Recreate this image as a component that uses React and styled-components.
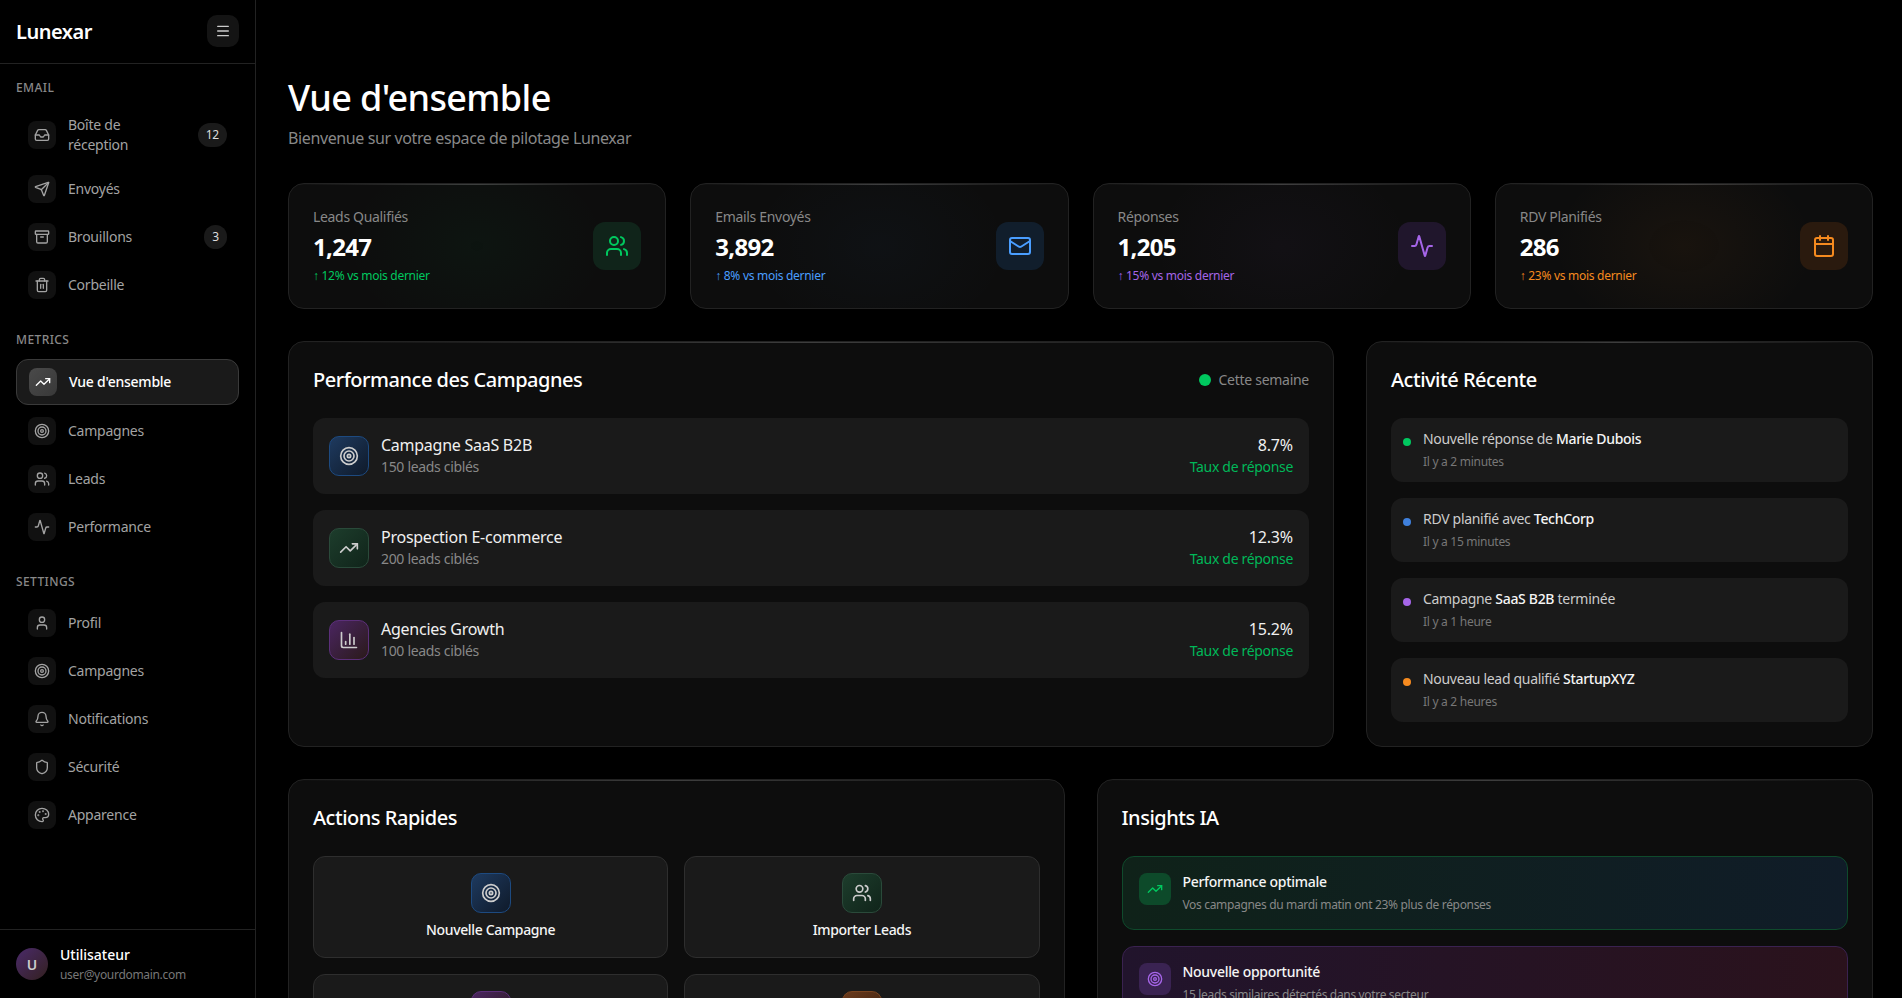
import React from 'react';
import styled, { createGlobalStyle } from 'styled-components';
import { Menu, Inbox, Send, Archive, Trash2, TrendingUp, Target, Users, Activity, User, Bell, Shield, Palette, Mail, Calendar, ChartColumn, Zap } from 'lucide-react';

const Global = createGlobalStyle`
  html, body { margin: 0; padding: 0; background: #000; height: 100%; overflow: hidden; }
  * { box-sizing: border-box; }
  body { font-family: "Noto Sans", "Open Sans", sans-serif; color: #fff; }
`;

const Shell = styled.div`display: flex; height: 998px; overflow: hidden; background: #000;`;
const Sidebar = styled.aside`width: 256px; flex: none; border-right: 1px solid #222; display: flex; flex-direction: column;`;
const SideHead = styled.div`height: 64px; flex: none; padding: 0 16px 1px; border-bottom: 1px solid #222; display: flex; align-items: center; justify-content: space-between;`;
const Logo = styled.div`font-size: 20px; font-weight: 600; letter-spacing: -0.5px;`;
const Toggle = styled.button`width: 32px; height: 32px; border: 0; padding: 0; border-radius: 10px; background: #141414; color: #ccc; display: flex; align-items: center; justify-content: center;`;
const SideNav = styled.nav`flex: 1; padding: 15px 16px 0;`;
const Group = styled.div`margin-bottom: 24px;`;
const GroupLabel = styled.div`font-size: 12px; line-height: 18px; letter-spacing: 0.4px; color: #888; font-weight: 500; margin-bottom: 10px;`;
const Items = styled.div`display: flex; flex-direction: column; gap: 4px;`;
const Item = styled.div`
  display: flex; align-items: center; gap: 12px; padding: 8px 12px; border-radius: 12px;
  border: ${p => (p.$active ? '1px solid #3a3a3a' : '0')};
  background: ${p => (p.$active ? '#1a1a1a' : 'transparent')};
  color: ${p => (p.$active ? '#fff' : '#a3a3a3')};
  font-size: 14px; line-height: 20px; letter-spacing: -0.017em; font-weight: ${p => (p.$active ? 500 : 400)};
`;
const ItemIcon = styled.span`
  width: 28px; height: 28px; flex: none; border-radius: 8px; display: flex; align-items: center; justify-content: center;
  background: ${p => (p.$active ? 'linear-gradient(135deg,#4a4a4a,#383838)' : '#111')};
  color: ${p => (p.$active ? '#fff' : '#a3a3a3')};
`;
const ItemText = styled.span`flex: 1; min-width: 0; white-space: pre-line;`;
const Badge = styled.span`flex: none; height: 24px; min-width: 23px; padding: 0 8px; border-radius: 12px; background: #1a1a1a; color: #ddd; font-size: 12px; line-height: 24px; text-align: center;`;
const SideFoot = styled.div`flex: none; border-top: 1px solid #222; padding: 16px; display: flex; align-items: center; gap: 12px; height: 69px;`;
const Avatar = styled.div`width: 32px; height: 32px; border-radius: 50%; flex: none; background: linear-gradient(135deg,#4a2a6a,#33201f); color: #ccc; font-size: 14px; font-weight: 600; display: flex; align-items: center; justify-content: center;`;
const UserName = styled.div`font-size: 14px; line-height: 18px; font-weight: 500;`;
const UserMail = styled.div`font-size: 12px; line-height: 16px; color: #777; letter-spacing: -0.026em; margin-top: 3px;`;

const Main = styled.main`flex: 1; min-width: 0; padding: 78px 29px 0 32px; overflow: hidden;`;
const Title = styled.h1`margin: 0; font-size: 36px; line-height: 40px; font-weight: 500; letter-spacing: -0.017em;`;
const Sub = styled.p`margin: 8px 0 33px; font-size: 16px; line-height: 24px; color: #888; letter-spacing: -0.024em;`;
const Stats = styled.div`display: grid; grid-template-columns: repeat(4, 1fr); gap: 24px; margin-bottom: 32px;`;
const Surface = styled.section`
  position: relative; overflow: hidden; background: #0d0d0d; border: 1px solid #222; border-radius: 16px;
  &::before { content: ''; position: absolute; top: 0; left: 0; right: 0; height: 1px; background: linear-gradient(90deg, transparent, rgba(255,255,255,.2), transparent); }
`;
const StatCard = styled(Surface)`
  height: 126px; padding: 24px; display: flex; align-items: center; justify-content: space-between;
  background: radial-gradient(ellipse 130px 95px at 50% 50%, ${p => p.$glow}, transparent), #0d0d0d;
`;
const StatLabel = styled.div`font-size: 14px; line-height: 18px; color: #888; margin-bottom: 5px; letter-spacing: -0.023em;`;
const StatValue = styled.div`font-size: 24px; line-height: 32px; font-weight: 700; margin-bottom: 5px; letter-spacing: -0.03em;`;
const StatDelta = styled.div`font-size: 12px; line-height: 16px; color: ${p => p.$c}; letter-spacing: -0.024em;`;
const StatIcon = styled.div`width: 48px; height: 48px; border-radius: 12px; background: ${p => p.$bg}; color: ${p => p.$c}; display: flex; align-items: center; justify-content: center;`;

const Row2 = styled.div`display: grid; grid-template-columns: 1046px 1fr; gap: 32px; margin-bottom: 32px;`;
const Row3 = styled.div`display: grid; grid-template-columns: 1fr 1fr; gap: 32px;`;
const Panel = styled(Surface)`padding: 24px;`;
const PanelHead = styled.div`display: flex; align-items: center; justify-content: space-between; margin-bottom: 24px;`;
const PanelTitle = styled.h2`margin: 0; font-size: 20px; line-height: 28px; font-weight: 500; letter-spacing: -0.024em;`;
const Week = styled.div`display: flex; align-items: center; gap: 8px; font-size: 14px; line-height: 20px; color: #888; letter-spacing: -0.02em;`;
const WeekDot = styled.span`width: 12px; height: 12px; border-radius: 50%; background: #00c85f;`;
const List = styled.div`display: flex; flex-direction: column; gap: 16px;`;
const CampRow = styled.div`height: 76px; padding: 0 16px; background: #1a1a1a; border-radius: 12px; display: flex; align-items: center; gap: 12px;`;
const ToneBox = styled.div`
  width: 40px; height: 40px; flex: none; border-radius: 10px; color: #ccc; display: flex; align-items: center; justify-content: center;
  background: ${p => p.$tone.bg}; border: 1px solid ${p => p.$tone.line};
`;
const CampMain = styled.div`flex: 1;`;
const CampName = styled.div`font-size: 16px; line-height: 20px; margin-bottom: 2px; color: #f0f0f0; letter-spacing: -0.016em;`;
const CampSub = styled.div`font-size: 14px; line-height: 20px; color: #888; letter-spacing: -0.023em;`;
const CampSide = styled.div`text-align: right;`;
const CampRate = styled.div`font-size: 16px; line-height: 20px; margin-bottom: 2px; color: #f0f0f0; letter-spacing: -0.01em;`;
const CampRateLabel = styled.div`font-size: 14px; line-height: 20px; color: #00b859; letter-spacing: -0.023em;`;
const ActRow = styled.div`height: 64px; padding: 12px; background: #1a1a1a; border-radius: 12px; display: flex; align-items: flex-start; gap: 8px;`;
const ActDot = styled.span`width: 8px; height: 8px; flex: none; border-radius: 50%; margin: 8px 4px 0 0; background: ${p => p.$c};`;
const ActText = styled.div`font-size: 14px; line-height: 18px; color: #ccc; letter-spacing: -0.022em; b { font-weight: 500; color: #f5f5f5; }`;
const ActTime = styled.div`font-size: 12px; line-height: 16px; color: #777; margin-top: 6px; letter-spacing: -0.024em;`;
const ActBody = styled.div``;
const Actions = styled.div`display: grid; grid-template-columns: 1fr 1fr; gap: 16px;`;
const ActionBtn = styled.div`height: 102px; padding: 16px; background: #1a1a1a; border: 1px solid #2e2e2e; border-radius: 12px; display: flex; flex-direction: column; align-items: center; gap: 8px;`;
const ActionLabel = styled.div`font-size: 14px; line-height: 18px; font-weight: 500; color: #f5f5f5; letter-spacing: -0.025em;`;
const Insight = styled.div`height: 74px; padding: 16px; border-radius: 12px; display: flex; gap: 12px; background: ${p => p.$bg}; border: 1px solid ${p => p.$line};`;
const InsightIcon = styled.div`width: 32px; height: 32px; flex: none; border-radius: 8px; display: flex; align-items: center; justify-content: center; background: ${p => p.$bg}; color: ${p => p.$c};`;
const InsightTitle = styled.div`font-size: 14px; line-height: 18px; font-weight: 500; color: #f5f5f5; margin-bottom: 6px; letter-spacing: -0.021em;`;
const InsightText = styled.div`font-size: 12px; line-height: 16px; color: #888; letter-spacing: -0.028em;`;

const tones = {
  blue: { bg: 'linear-gradient(135deg,#1e3a5f,#0f1a2a)', line: '#1d4a80' },
  green: { bg: 'linear-gradient(135deg,#1d3d2c,#10241a)', line: '#2a4a3a' },
  purple: { bg: 'linear-gradient(135deg,#4a2560,#2a1a1a)', line: '#5c2f7a' },
  orange: { bg: 'linear-gradient(135deg,#6a3a1c,#3a2010)', line: '#7a4520' },
};

const nav = [
  { label: 'EMAIL', items: [
    { t: 'Boîte de\nréception', I: Inbox, b: '12' }, { t: 'Envoyés', I: Send }, { t: 'Brouillons', I: Archive, b: '3' }, { t: 'Corbeille', I: Trash2 },
  ]},
  { label: 'METRICS', items: [
    { t: "Vue d'ensemble", I: TrendingUp, active: true }, { t: 'Campagnes', I: Target }, { t: 'Leads', I: Users }, { t: 'Performance', I: Activity },
  ]},
  { label: 'SETTINGS', items: [
    { t: 'Profil', I: User }, { t: 'Campagnes', I: Target }, { t: 'Notifications', I: Bell }, { t: 'Sécurité', I: Shield }, { t: 'Apparence', I: Palette },
  ]},
];
const stats = [
  { l: 'Leads Qualifiés', v: '1,247', d: '↑ 12% vs mois dernier', c: '#00c85f', bg: '#10241a', glow: 'rgba(0,200,95,.04)', I: Users },
  { l: 'Emails Envoyés', v: '3,892', d: '↑ 8% vs mois dernier', c: '#4a9eff', bg: '#111e2c', glow: 'rgba(74,158,255,.03)', I: Mail },
  { l: 'Réponses', v: '1,205', d: '↑ 15% vs mois dernier', c: '#a565e8', bg: '#20162c', glow: 'rgba(165,101,232,.03)', I: Activity },
  { l: 'RDV Planifiés', v: '286', d: '↑ 23% vs mois dernier', c: '#f58a1f', bg: '#2a1a0e', glow: 'rgba(245,138,31,.05)', I: Calendar },
];
const camps = [
  { n: 'Campagne SaaS B2B', s: '150 leads ciblés', r: '8.7%', I: Target, t: tones.blue },
  { n: 'Prospection E-commerce', s: '200 leads ciblés', r: '12.3%', I: TrendingUp, t: tones.green },
  { n: 'Agencies Growth', s: '100 leads ciblés', r: '15.2%', I: ChartColumn, t: tones.purple },
];
const acts = [
  { c: '#00c85f', x: <>Nouvelle réponse de <b>Marie Dubois</b></>, w: 'Il y a 2 minutes' },
  { c: '#3f80dc', x: <>RDV planifié avec <b>TechCorp</b></>, w: 'Il y a 15 minutes' },
  { c: '#a565e8', x: <>Campagne <b>SaaS B2B</b> terminée</>, w: 'Il y a 1 heure' },
  { c: '#f58a1f', x: <>Nouveau lead qualifié <b>StartupXYZ</b></>, w: 'Il y a 2 heures' },
];
const actions = [
  { k: 'a', l: 'Nouvelle Campagne', I: Target, t: tones.blue },
  { k: 'b', l: 'Importer Leads', I: Users, t: tones.green },
  { k: 'c', I: ChartColumn, t: tones.purple },
  { k: 'd', I: Zap, t: tones.orange },
];

export default function App() {
  return (
    <Shell>
      <Global />
      <Sidebar>
        <SideHead>
          <Logo>Lunexar</Logo>
          <Toggle><Menu size={16} /></Toggle>
        </SideHead>
        <SideNav>
          {nav.map(g => (
            <Group key={g.label}>
              <GroupLabel>{g.label}</GroupLabel>
              <Items>
                {g.items.map(it => (
                  <Item key={it.t} $active={it.active}>
                    <ItemIcon $active={it.active}><it.I size={16} /></ItemIcon>
                    <ItemText>{it.t}</ItemText>
                    {it.b && <Badge>{it.b}</Badge>}
                  </Item>
                ))}
              </Items>
            </Group>
          ))}
        </SideNav>
        <SideFoot>
          <Avatar>U</Avatar>
          <div>
            <UserName>Utilisateur</UserName>
            <UserMail>user@yourdomain.com</UserMail>
          </div>
        </SideFoot>
      </Sidebar>
      <Main>
        <Title>Vue d'ensemble</Title>
        <Sub>Bienvenue sur votre espace de pilotage Lunexar</Sub>
        <Stats>
          {stats.map(s => (
            <StatCard key={s.l} $glow={s.glow}>
              <div>
                <StatLabel>{s.l}</StatLabel>
                <StatValue>{s.v}</StatValue>
                <StatDelta $c={s.c}>{s.d}</StatDelta>
              </div>
              <StatIcon $bg={s.bg} $c={s.c}><s.I size={24} /></StatIcon>
            </StatCard>
          ))}
        </Stats>
        <Row2>
          <Panel>
            <PanelHead>
              <PanelTitle>Performance des Campagnes</PanelTitle>
              <Week><WeekDot />Cette semaine</Week>
            </PanelHead>
            <List>
              {camps.map(c => (
                <CampRow key={c.n}>
                  <ToneBox $tone={c.t}><c.I size={20} /></ToneBox>
                  <CampMain>
                    <CampName>{c.n}</CampName>
                    <CampSub>{c.s}</CampSub>
                  </CampMain>
                  <CampSide>
                    <CampRate>{c.r}</CampRate>
                    <CampRateLabel>Taux de réponse</CampRateLabel>
                  </CampSide>
                </CampRow>
              ))}
            </List>
          </Panel>
          <Panel>
            <PanelHead><PanelTitle>Activité Récente</PanelTitle></PanelHead>
            <List>
              {acts.map(a => (
                <ActRow key={a.w}>
                  <ActDot $c={a.c} />
                  <ActBody>
                    <ActText>{a.x}</ActText>
                    <ActTime>{a.w}</ActTime>
                  </ActBody>
                </ActRow>
              ))}
            </List>
          </Panel>
        </Row2>
        <Row3>
          <Panel>
            <PanelHead><PanelTitle>Actions Rapides</PanelTitle></PanelHead>
            <Actions>
              {actions.map(a => (
                <ActionBtn key={a.k}>
                  <ToneBox $tone={a.t}><a.I size={20} /></ToneBox>
                  {a.l && <ActionLabel>{a.l}</ActionLabel>}
                </ActionBtn>
              ))}
            </Actions>
          </Panel>
          <Panel>
            <PanelHead><PanelTitle>Insights IA</PanelTitle></PanelHead>
            <List>
              <Insight $bg="linear-gradient(90deg,#0f2219,#101c28)" $line="#0f4a2c">
                <InsightIcon $bg="#0d4a2a" $c="#00c85f"><TrendingUp size={16} /></InsightIcon>
                <div>
                  <InsightTitle>Performance optimale</InsightTitle>
                  <InsightText>Vos campagnes du mardi matin ont 23% plus de réponses</InsightText>
                </div>
              </Insight>
              <Insight $bg="linear-gradient(90deg,#21142c,#2a121c)" $line="#3a2250">
                <InsightIcon $bg="#3a2352" $c="#a565e8"><Target size={16} /></InsightIcon>
                <div>
                  <InsightTitle>Nouvelle opportunité</InsightTitle>
                  <InsightText>15 leads similaires détectés dans votre secteur</InsightText>
                </div>
              </Insight>
            </List>
          </Panel>
        </Row3>
      </Main>
    </Shell>
  );
}
